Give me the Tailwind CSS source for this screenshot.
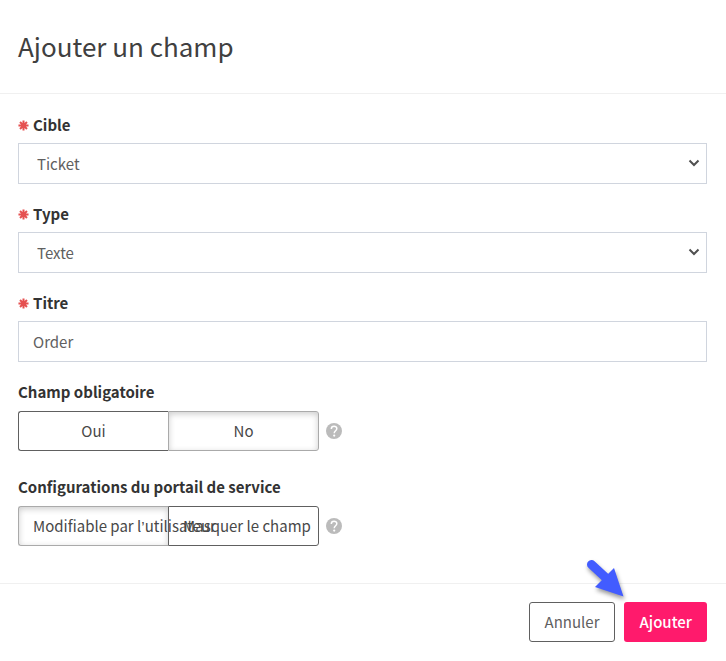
<!DOCTYPE html>
<html lang="fr">
<head>
  <meta charset="UTF-8" />
  <meta name="viewport" content="width=device-width, initial-scale=1.0"/>
  <title>Ajouter un champ</title>
  <script src="https://cdn.jsdelivr.net/npm/@tailwindcss/browser@4"></script>
</head>
<body class="bg-white font-['Noto_Sans_CJK_SC','Noto_Sans',sans-serif] text-[15px] leading-5 text-[#606060]">
  <svg class="hidden">
    <symbol id="required" viewBox="0 0 12 12">
      <path d="M6 .5v11M.5 6h11M2.200 2.200l7.600 7.600M9.800 2.200l-7.600 7.600" fill="none" stroke="#e55050" stroke-width="2.200"/>
    </symbol>
    <symbol id="chevron" viewBox="0 0 12 8">
      <path d="M1.500 1.500L6 6l4.500-4.500" fill="none" stroke="#505050" stroke-width="2"/>
    </symbol>
    <symbol id="help" viewBox="0 0 16 16">
      <circle cx="8" cy="8" r="8" fill="#bbb"/>
      <path d="M5.300 6C5.300 2.300 11 2.500 10.800 5.800C10.700 7.700 8.200 7.800 8.200 10.200" fill="none" stroke="#fff" stroke-width="1.500"/>
      <circle cx="8.200" cy="12.600" r="1.100" fill="#fff"/>
    </symbol>
  </svg>

  <form>
    <header class="border-b border-[#f0f0f0] px-[18px] pt-[26px] pb-[27px]">
      <h1 class="text-[26px] leading-10 text-[#404040]">Ajouter un champ</h1>
    </header>

    <main class="flex flex-col pt-[21px] pr-[19px] pb-[37px] pl-[18px]">
      <div class="mb-5">
        <label for="target" class="mb-2 flex items-center gap-1 font-bold text-[#333]">
          <svg class="size-[11px]"><use href="#required"/></svg>Cible
        </label>
        <div class="relative">
          <select id="target" class="h-[41px] w-full appearance-none border border-[#d0d5de] bg-white px-[18px]">
            <option>Ticket</option>
          </select>
          <svg class="pointer-events-none absolute top-4 right-[7px] h-2 w-3"><use href="#chevron"/></svg>
        </div>
      </div>

      <div class="mb-5">
        <label for="type" class="mb-2 flex items-center gap-1 font-bold text-[#333]">
          <svg class="size-[11px]"><use href="#required"/></svg>Type
        </label>
        <div class="relative">
          <select id="type" class="h-[41px] w-full appearance-none border border-[#d0d5de] bg-white px-[18px]">
            <option>Texte</option>
          </select>
          <svg class="pointer-events-none absolute top-4 right-[7px] h-2 w-3"><use href="#chevron"/></svg>
        </div>
      </div>

      <div class="mb-5">
        <label for="title" class="mb-2 flex items-center gap-1 font-bold text-[#333]">
          <svg class="size-[11px]"><use href="#required"/></svg>Titre
        </label>
        <input id="title" type="text" value="Order" class="h-[41px] w-full border border-[#d0d5de] px-[14px]">
      </div>

      <fieldset class="mb-[26px]">
        <legend class="mb-[9px] font-bold text-[#333]">Champ obligatoire</legend>
        <div class="flex items-center gap-[7px]">
          <div class="flex h-10 w-[301px] text-[#484848]">
            <label class="flex flex-1 cursor-pointer items-center justify-center rounded-l-[3px] border border-r-0 border-[#606060] has-checked:border-[#aaa] has-checked:shadow-[inset_0_2px_6px_#0003]">
              <input type="radio" name="required" class="sr-only">Oui
            </label>
            <label class="flex flex-1 cursor-pointer items-center justify-center rounded-r-[3px] border border-[#606060] has-checked:border-[#aaa] has-checked:shadow-[inset_0_2px_6px_#0003]">
              <input type="radio" name="required" class="sr-only" checked>No
            </label>
          </div>
          <button type="button" aria-label="Aide"><svg class="size-4"><use href="#help"/></svg></button>
        </div>
      </fieldset>

      <fieldset>
        <legend class="mb-[9px] font-bold text-[#333]">Configurations du portail de service</legend>
        <div class="flex items-center gap-[7px]">
          <div class="flex h-10 w-[301px] text-[#484848]">
            <label class="flex w-[150px] cursor-pointer items-center rounded-l-[3px] border border-r-0 border-[#606060] px-[14px] whitespace-nowrap has-checked:border-[#aaa] has-checked:shadow-[inset_0_2px_6px_#0003]">
              <input type="radio" name="portal" class="sr-only" checked>
              <span>Modifiable par l<span class="font-['Liberation_Sans',sans-serif]">’</span>utilisateur</span>
            </label>
            <label class="flex w-[151px] cursor-pointer items-center rounded-r-[3px] border border-[#606060] px-[14px] whitespace-nowrap has-checked:border-[#aaa] has-checked:shadow-[inset_0_2px_6px_#0003]">
              <input type="radio" name="portal" class="sr-only">Masquer le champ
            </label>
          </div>
          <button type="button" aria-label="Aide"><svg class="size-4"><use href="#help"/></svg></button>
        </div>
      </fieldset>
    </main>

    <footer class="relative flex justify-end gap-[9px] border-t border-[#f0f0f0] py-[18px] pr-[19px] pl-[18px]">
      <button type="button" class="h-10 rounded-[3px] border border-[#606060] px-[15px]">Annuler</button>
      <button type="submit" class="h-10 rounded-[3px] bg-[#ff1a6c] px-[15px] font-medium text-white">Ajouter</button>
      <svg class="pointer-events-none absolute -top-7 right-[100px] h-10 w-[42px] overflow-visible drop-shadow-[1px_3px_2px_#0006]" viewBox="0 0 42 40">
        <path d="M7.500 8.500L21 21" stroke="#425cff" stroke-width="9" stroke-linecap="round"/>
        <path d="M30 12L39.500 40.500L11 31z" fill="#425cff"/>
      </svg>
    </footer>
  </form>
</body>
</html>
